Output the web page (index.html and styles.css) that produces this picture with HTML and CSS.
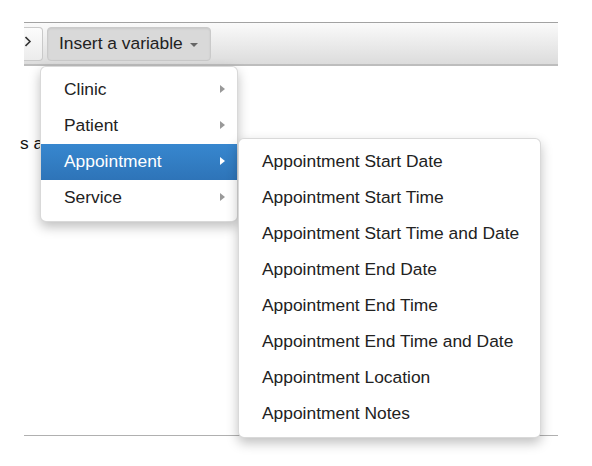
FILE: index.html
```html
<!DOCTYPE html>
<html>
<head>
<meta charset="utf-8">
<link rel="stylesheet" href="styles.css">
</head>
<body>
<div class="editor">
  <div class="toolbar">
    <div class="btn btn-code">
      <svg width="8" height="12" viewBox="0 0 8 12"><path d="M0.5 1 L5 5.5 L0.5 10" fill="none" stroke="#333" stroke-width="1.6"/></svg>
    </div>
    <div class="btn btn-insert">Insert a variable <span class="caret"></span></div>
  </div>
  <div class="content"><p class="text">s a</p></div>

  <ul class="menu main-menu">
    <li class="item has-sub">Clinic</li>
    <li class="item has-sub">Patient</li>
    <li class="item has-sub active">Appointment
      <ul class="menu sub-menu">
        <li class="item">Appointment Start Date</li>
        <li class="item">Appointment Start Time</li>
        <li class="item">Appointment Start Time and Date</li>
        <li class="item">Appointment End Date</li>
        <li class="item">Appointment End Time</li>
        <li class="item">Appointment End Time and Date</li>
        <li class="item">Appointment Location</li>
        <li class="item">Appointment Notes</li>
      </ul>
    </li>
    <li class="item has-sub">Service</li>
  </ul>
</div>
</body>
</html>
```
FILE: styles.css
```css
html, body {
  margin: 0;
  padding: 0;
  background: #fff;
}
body {
  font-family: "Liberation Sans", Arial, sans-serif;
  font-size: 17.4px;
  color: #222;
  min-height: 466px;
  padding-bottom: 30px;
  box-sizing: border-box;
}
.editor {
  position: relative;
  margin: 22px 0 0 24px;
  width: 534px;
  padding-top: 0;
}
.editor::before {
  content: "";
  display: table;
}
.toolbar {
  height: 41px;
  border-top: 1px solid #a2a2a2;
  border-bottom: 2px solid #bdbdbd;
  background: linear-gradient(#fafafa, #dcdcdc);
  display: flex;
  align-items: center;
  gap: 4px;
}
.btn {
  height: 34px;
  box-sizing: border-box;
  border: 1px solid #c9c9c9;
  border-radius: 4px;
  display: flex;
  align-items: center;
}
.btn-code {
  width: 19px;
  border-left: none;
  border-radius: 0 4px 4px 0;
  background: linear-gradient(#fcfcfc, #ececec);
  padding-left: 1px;
  align-items: flex-start;
  padding-top: 8px;
}
.btn-insert {
  width: 164px;
  padding-left: 11px;
  background: #d9d9d9;
  border-color: #cacaca;
  box-shadow: inset 0 1px 2px rgba(0,0,0,0.08);
  color: #222;
}
.caret {
  display: inline-block;
  width: 0;
  height: 0;
  margin-left: 7px;
  margin-top: 2px;
  border-left: 4.5px solid transparent;
  border-right: 4.5px solid transparent;
  border-top: 4.5px solid #666;
}
.content {
  height: 369px;
  border-bottom: 1px solid #b0b0b0;
}
.text {
  margin: 0;
  padding-top: 67px;
  margin-left: -4px;
  line-height: 20px;
  color: #111;
}
.menu {
  list-style: none;
  margin: 0;
  padding: 5px 0;
  background: #fff;
  border: 1px solid rgba(0,0,0,0.15);
  border-radius: 6px;
  box-shadow: 0 5px 12px rgba(0,0,0,0.25);
  position: absolute;
}
.main-menu {
  left: 16px;
  top: 44px;
  width: 196px;
}
.item {
  position: relative;
  height: 36px;
  line-height: 35px;
  padding-left: 23px;
  color: #222;
  white-space: nowrap;
}
.has-sub::after {
  content: "";
  position: absolute;
  right: 12px;
  top: 13px;
  width: 0;
  height: 0;
  border-top: 4.5px solid transparent;
  border-bottom: 4.5px solid transparent;
  border-left: 5px solid #999;
}
.item.active {
  background: linear-gradient(#3787cf, #2e74b8);
  color: #fff;
}
.item.active::after {
  border-left-color: #fff;
}
.sub-menu {
  left: 197px;
  top: -6px;
  width: 301px;
}
```
